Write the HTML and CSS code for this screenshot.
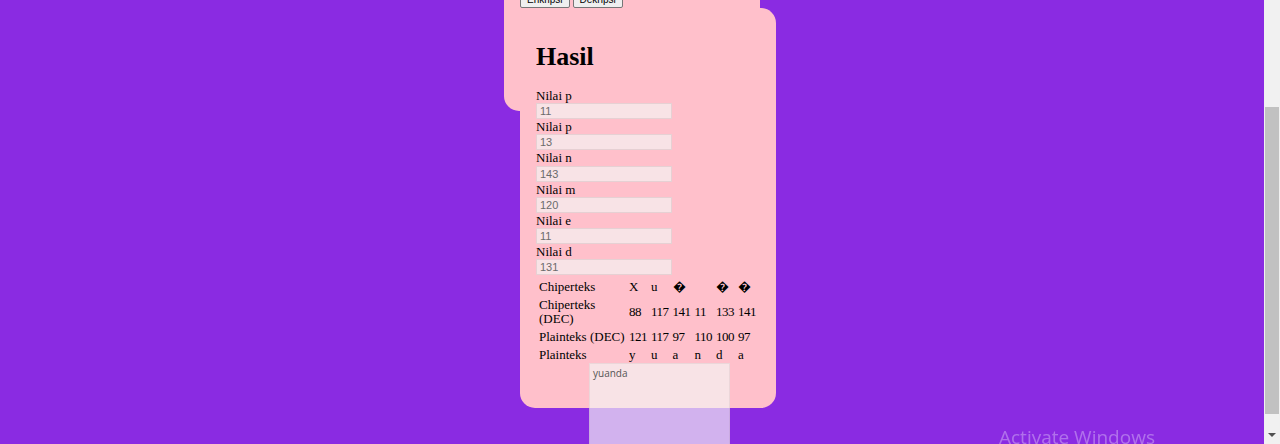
FILE: index.html
```html
<!DOCTYPE html>
<html lang="id">
<head>
<meta charset="utf-8">
<title>RSA</title>
<link rel="stylesheet" href="styles.css">
</head>
<body>
<div class="page">
  <div class="stack">
    <div class="form-box">
      <div class="actions">
        <button class="btn">Enkripsi</button>
        <button class="btn">Dekripsi</button>
      </div>
    </div>
    <div class="result-box">
      <h1 class="title">Hasil</h1>
      <label class="lbl">Nilai p</label>
      <input class="fld" type="text" value="11" readonly>
      <label class="lbl">Nilai p</label>
      <input class="fld" type="text" value="13" readonly>
      <label class="lbl">Nilai n</label>
      <input class="fld" type="text" value="143" readonly>
      <label class="lbl">Nilai m</label>
      <input class="fld" type="text" value="120" readonly>
      <label class="lbl">Nilai e</label>
      <input class="fld" type="text" value="11" readonly>
      <label class="lbl">Nilai d</label>
      <input class="fld" type="text" value="131" readonly>
      <table class="tbl">
        <tr><td class="head">Chiperteks</td><td>X</td><td>u</td><td>&#xFFFD;</td><td></td><td>&#xFFFD;</td><td>&#xFFFD;</td></tr>
        <tr><td class="head">Chiperteks (DEC)</td><td>88</td><td>117</td><td>141</td><td>11</td><td>133</td><td>141</td></tr>
        <tr><td class="head">Plainteks (DEC)</td><td>121</td><td>117</td><td>97</td><td>110</td><td>100</td><td>97</td></tr>
        <tr><td class="head">Plainteks</td><td>y</td><td>u</td><td>a</td><td>n</td><td>d</td><td>a</td></tr>
      </table>
      <textarea class="out" readonly>yuanda</textarea>
    </div>
  </div>
</div>
<div class="scrollbar">
  <div class="thumb"></div>
  <div class="arrow"></div>
</div>
<div class="watermark">Activate Windows</div>
</body>
</html>
```
FILE: styles.css
```css
html, body {
  margin: 0;
  padding: 0;
  height: 444px;
  overflow: hidden;
}
body {
  background: #8a2be2;
  font-family: "Liberation Serif", "Times New Roman", serif;
  font-size: 13px;
  color: #000;
}
.page {
  width: 1264px;
}
.stack {
  width: 256px;
  margin: 0 auto;
}
.form-box {
  box-sizing: border-box;
  width: 256px;
  height: 151px;
  margin-top: -40px;
  padding: 30px 16px 0;
  background: #ffc0cb;
  border-radius: 0 0 15px 15px;
}
.actions {
  display: flex;
  gap: 3px;
}
.btn {
  font-family: "Liberation Sans", Arial, sans-serif;
  font-size: 10px;
  line-height: 13px;
  padding: 2px 6px 1px;
  background: #efefef;
  border: 1px solid #767676;
  border-radius: 2px;
  color: #000;
}
.result-box {
  position: relative;
  box-sizing: border-box;
  width: 256px;
  height: 400px;
  margin: -103px 0 0 16px;
  padding: 16px;
  background: #ffc0cb;
  border-radius: 15px;
}
.title {
  font-size: 26px;
  font-weight: bold;
  line-height: 30px;
  margin: 18px 0 16px;
}
.lbl {
  display: block;
  line-height: 15.2px;
  height: 15.2px;
}
.fld {
  display: block;
  box-sizing: border-box;
  width: 136px;
  height: 16px;
  margin: 0;
  padding: 0 3px;
  font-family: "Liberation Sans", Arial, sans-serif;
  font-size: 11px;
  color: #6b6b6b;
  background: rgba(245, 243, 243, 0.68);
  border: 1px solid rgba(150, 120, 125, 0.18);
  outline: none;
}
.tbl {
  margin-top: 2px;
  border-spacing: 2px;
  font-size: 13px;
}
.tbl td {
  padding: 1px;
  line-height: 14px;
  letter-spacing: -0.5px;
}
.tbl td.head {
  width: 86px;
  letter-spacing: 0;
}
.out {
  display: block;
  box-sizing: border-box;
  width: 141px;
  height: 130px;
  margin: -2px 0 0 53px;
  padding: 3px;
  resize: none;
  font-family: "Open Sans", "Noto Sans", sans-serif;
  font-size: 10px;
  line-height: 13px;
  color: #555;
  background: rgba(245, 243, 243, 0.68);
  border: 1px solid rgba(150, 120, 125, 0.12);
  outline: none;
}
.scrollbar {
  position: fixed;
  top: 0;
  right: 0;
  width: 16px;
  height: 444px;
  background: #f1f1f1;
}
.thumb {
  position: absolute;
  left: 1px;
  top: 107px;
  width: 14px;
  height: 307px;
  background: #c1c1c1;
}
.arrow {
  position: absolute;
  left: 4px;
  bottom: 7px;
  width: 0;
  height: 0;
  border-left: 4px solid transparent;
  border-right: 4px solid transparent;
  border-top: 4px solid #505050;
}
.watermark {
  position: fixed;
  left: 999px;
  top: 425px;
  font-family: "Open Sans", "Noto Sans", sans-serif;
  font-size: 19px;
  line-height: 24px;
  color: rgba(255, 255, 255, 0.33);
  white-space: nowrap;
}
```
